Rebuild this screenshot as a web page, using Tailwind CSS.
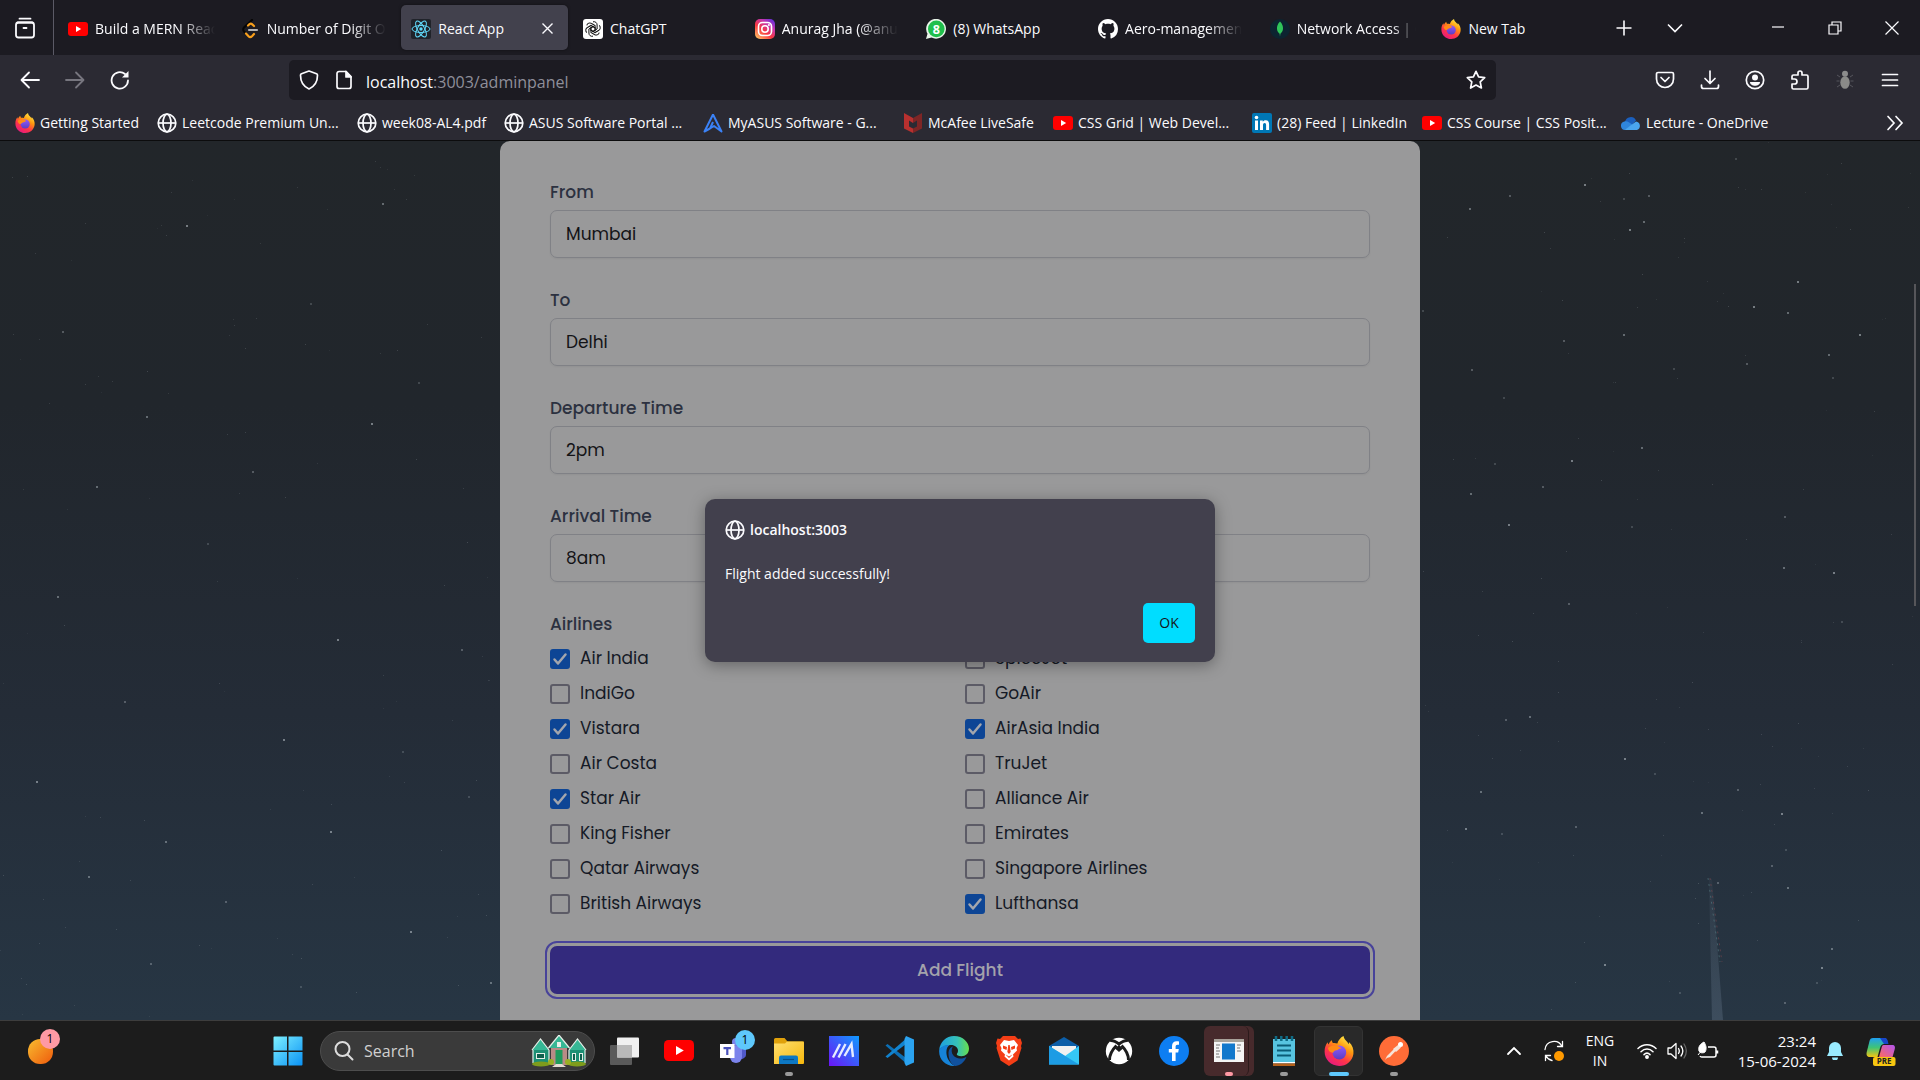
<!DOCTYPE html>
<html lang="en">
<head>
<meta charset="utf-8">
<title>React App</title>
<script src="https://cdn.jsdelivr.net/npm/@tailwindcss/browser@4"></script>
</head>
<body class="flex h-screen flex-col overflow-hidden bg-[#1c1b22] font-['Segoe_UI','Open_Sans',sans-serif] text-[14px] leading-5 text-[#fbfbfe]">

<svg class="absolute size-0" aria-hidden="true">
  <defs>
    <linearGradient id="ffBody" x1="0.8" y1="0" x2="0.2" y2="1"><stop offset="0" stop-color="#fff44f"/><stop offset=".35" stop-color="#ff980e"/><stop offset=".65" stop-color="#ff3647"/><stop offset="1" stop-color="#e31587"/></linearGradient>
    <linearGradient id="ffGlobe" x1="0" y1="0" x2="0" y2="1"><stop offset="0" stop-color="#9059ff"/><stop offset="1" stop-color="#5b3ec0"/></linearGradient>
    <linearGradient id="insta" x1="0.1" y1="1" x2="0.9" y2="0"><stop offset="0" stop-color="#fec564"/><stop offset=".4" stop-color="#f9373f"/><stop offset=".7" stop-color="#c837ab"/><stop offset="1" stop-color="#5b2fe0"/></linearGradient>
    <linearGradient id="win" x1="0" y1="0" x2="1" y2="1"><stop offset="0" stop-color="#7df0ff"/><stop offset="1" stop-color="#0a92f5"/></linearGradient>
    <linearGradient id="orange" x1="0" y1="0" x2="1" y2="1"><stop offset="0" stop-color="#f8bd30"/><stop offset="1" stop-color="#ef5a0c"/></linearGradient>
    <linearGradient id="folder" x1="0" y1="0" x2="1" y2="1"><stop offset="0" stop-color="#ffdf70"/><stop offset="1" stop-color="#f7b80c"/></linearGradient>
    <linearGradient id="asus" x1="0" y1="1" x2="1" y2="0"><stop offset="0" stop-color="#6b14f5"/><stop offset="1" stop-color="#0f9bff"/></linearGradient>
    <linearGradient id="edgeTop" x1="0" y1="0" x2="1" y2="0"><stop offset="0" stop-color="#1d9fe0"/><stop offset=".6" stop-color="#35c1b8"/><stop offset="1" stop-color="#68e04c"/></linearGradient>
    <linearGradient id="copA" x1="0" y1="0" x2="0" y2="1"><stop offset="0" stop-color="#1f9ff2"/><stop offset=".5" stop-color="#3fc476"/><stop offset="1" stop-color="#f2c512"/></linearGradient>
    <linearGradient id="copB" x1="1" y1="0" x2="0" y2="1"><stop offset="0" stop-color="#b154f0"/><stop offset="1" stop-color="#ff6a5c"/></linearGradient>
    <linearGradient id="sky" x1="0" y1="0" x2="0" y2="1"><stop offset="0" stop-color="#22262a"/><stop offset=".3" stop-color="#21262c"/><stop offset=".65" stop-color="#242c37"/><stop offset="1" stop-color="#273644"/></linearGradient>
    <linearGradient id="beam" x1="0" y1="0" x2="0" y2="1"><stop offset="0" stop-color="#5b6b7c" stop-opacity=".1"/><stop offset="1" stop-color="#4f6072" stop-opacity=".55"/></linearGradient>
  </defs>
  <symbol id="firefox" viewBox="0 0 20 20">
    <path fill="url(#ffBody)" d="M13 0c.3 1.800 1.200 2.700 2.500 4 .5.6.8 1 1 1.500.2-.4.2-1 .1-1.500C19 6 20 9 19.600 12 18.800 17 14.800 20 10.200 20 4.600 20 .4 15.800.4 10.400c0-2.600.7-4.500 2-6.200.1.700.3 1.200.6 1.500C3.500 4.400 4.300 3.400 5.300 2.800c0 .8.200 1.400.7 1.900 1-.1 2 0 2.900.3C9.400 2.900 11 1 13 0z"/>
    <circle cx="10.200" cy="11" r="4.600" fill="url(#ffGlobe)"/>
    <path fill="#ff8a16" d="M2.600 8C4.300 6.300 6.600 5.900 9 6.700c1.300.4 2 1 2.700 1.700-1.200-.2-2 .2-2.500.9-1.200 0-2.600.5-3.200 1.800C4.200 11.200 3 10 2.600 8z"/>
  </symbol>
  <symbol id="youtube" viewBox="0 0 20 14"><rect width="20" height="14" rx="3" fill="#f00"/><path d="M8 4l5.200 3L8 10z" fill="#fff"/></symbol>
  <symbol id="globe" viewBox="0 0 20 20"><g fill="none" stroke="#fbfbfe" stroke-width="1.700"><circle cx="10" cy="10" r="8.800"/><ellipse cx="10" cy="10" rx="4" ry="8.800"/><path d="M1.200 10h17.600"/></g></symbol>
</svg>

<header class="shrink-0">
  <!-- Tab strip -->
  <div class="flex h-[55px] items-center bg-[#1c1b22]">
    <button aria-label="Firefox View" class="flex h-full w-[54px] items-center justify-center border-r border-[#5b5a66] pr-0.5">
      <svg class="size-6" viewBox="0 0 24 24" fill="none" stroke="#fbfbfe" stroke-width="1.800" stroke-linecap="round"><path d="M5.500 2.700h11M3.500 6.500h15"/><rect x="2" y="6.500" width="18" height="15" rx="2.500"/><path d="M9.500 12h3"/></svg>
    </button>
    <nav class="ml-1 flex h-[45px] min-w-0 flex-1 gap-[5px] whitespace-nowrap" aria-label="Tabs">
      <a href="#" class="flex min-w-0 flex-1 items-center gap-[7px] px-[10px] pt-0.5"><svg class="h-[14px] w-5 shrink-0"><use href="#youtube"/></svg><span class="overflow-hidden [mask-image:linear-gradient(to_right,black_70%,transparent)]">Build a MERN Reac</span></a>
      <a href="#" class="flex min-w-0 flex-1 items-center gap-[7px] px-[10px] pt-0.5"><svg class="size-5 shrink-0" viewBox="0 0 20 20" fill="none" stroke-width="2.200" stroke-linecap="round"><path stroke="#050505" d="M12 1 4 8.500c-1 1-1 3 0 4l2 2"/><path stroke="#f89f1b" d="M8 6.500l1.500-1.300c.8-.6 1.700-.6 2.500 0L14 7M6 14.500l2.500 2.700c1 1 2.500 1 3.500 0L14 15"/><path stroke="#b3b3b3" d="M9 11h8"/></svg><span class="overflow-hidden [mask-image:linear-gradient(to_right,black_70%,transparent)]">Number of Digit O</span></a>
      <a href="#" aria-current="page" class="flex min-w-0 flex-1 items-center gap-[7px] rounded-[5px] bg-[#42414d] px-[10px] pt-0.5 shadow-[0_0_3px_rgba(0,0,0,0.5)]"><svg class="size-5 shrink-0" viewBox="0 0 20 20"><rect width="20" height="20" rx="2" fill="#20232a"/><g fill="none" stroke="#61dafb" stroke-width="1"><ellipse cx="10" cy="10" rx="9" ry="3.500"/><ellipse cx="10" cy="10" rx="9" ry="3.500" transform="rotate(60 10 10)"/><ellipse cx="10" cy="10" rx="9" ry="3.500" transform="rotate(120 10 10)"/></g><circle cx="10" cy="10" r="1.700" fill="#61dafb"/></svg><span class="flex-1">React App</span><svg class="mr-1 size-[13px]" viewBox="0 0 13 13" stroke="#fbfbfe" stroke-width="1.400"><path d="M1.500 1.500l10 10M11.500 1.500l-10 10"/></svg></a>
      <a href="#" class="flex min-w-0 flex-1 items-center gap-[7px] px-[10px] pt-0.5"><svg class="size-5 shrink-0" viewBox="0 0 20 20"><rect width="20" height="20" rx="3" fill="#fff"/><g fill="none" stroke="#111" stroke-width="1"><path id="petal" d="M10 2.800c2.200-.6 4.200 1 4.100 3.200v4L10 12.400 7.500 11"/><use href="#petal" transform="rotate(60 10 10)"/><use href="#petal" transform="rotate(120 10 10)"/><use href="#petal" transform="rotate(180 10 10)"/><use href="#petal" transform="rotate(240 10 10)"/><use href="#petal" transform="rotate(300 10 10)"/></g></svg><span class="overflow-hidden">ChatGPT</span></a>
      <a href="#" class="flex min-w-0 flex-1 items-center gap-[7px] px-[10px] pt-0.5"><svg class="size-5 shrink-0" viewBox="0 0 20 20"><rect width="20" height="20" rx="5" fill="url(#insta)"/><g fill="none" stroke="#fff" stroke-width="1.600"><rect x="3.500" y="3.500" width="13" height="13" rx="4"/><circle cx="10" cy="10" r="3.200"/></g><circle cx="13.900" cy="6.100" r="1" fill="#fff"/></svg><span class="overflow-hidden [mask-image:linear-gradient(to_right,black_65%,transparent)]">Anurag Jha (@anu</span></a>
      <a href="#" class="flex min-w-0 flex-1 items-center gap-[7px] px-[10px] pt-0.5"><svg class="size-5 shrink-0" viewBox="0 0 20 20"><path d="M0 20l1.500-5.200A9.900 9.900 0 1 1 5.500 18.600z" fill="#e8f5e9"/><circle cx="10.300" cy="9.900" r="8.300" fill="#1fbf4c"/><text x="10.300" y="14.500" text-anchor="middle" font-size="12.500" font-weight="700" fill="#fff">8</text></svg><span class="overflow-hidden">(8) WhatsApp</span></a>
      <a href="#" class="flex min-w-0 flex-1 items-center gap-[7px] px-[10px] pt-0.5"><svg class="size-5 shrink-0" viewBox="0 0 16 16" fill="#fff"><path d="M8 0C3.580 0 0 3.580 0 8c0 3.540 2.290 6.530 5.470 7.590.4.070.55-.17.55-.38 0-.19-.01-.82-.01-1.490-2.010.37-2.530-.49-2.690-.94-.09-.23-.48-.94-.82-1.130-.28-.15-.68-.52-.01-.53.63-.01 1.080.58 1.230.82.720 1.210 1.870.87 2.330.66.070-.52.280-.87.510-1.070-1.780-.2-3.640-.89-3.640-3.950 0-.87.310-1.590.82-2.150-.08-.2-.36-1.020.08-2.120 0 0 .67-.21 2.200.82.640-.18 1.320-.27 2-.27s1.360.09 2 .27c1.530-1.040 2.200-.82 2.200-.82.440 1.100.160 1.920.080 2.120.510.560.820 1.270.820 2.150 0 3.070-1.870 3.750-3.650 3.950.29.250.540.730.540 1.480 0 1.070-.01 1.930-.01 2.200 0 .21.150.46.550.38A8.010 8.010 0 0 0 16 8c0-4.420-3.580-8-8-8z"/></svg><span class="overflow-hidden [mask-image:linear-gradient(to_right,black_70%,transparent)]">Aero-managemen</span></a>
      <a href="#" class="flex min-w-0 flex-1 items-center gap-[7px] px-[10px] pt-0.5"><svg class="size-5 shrink-0" viewBox="0 0 20 20"><circle cx="10" cy="10" r="10" fill="#0c2430"/><path d="M10 2.500c2.400 2.400 3.200 5 3 7.500-.2 2-1.300 3.700-2.600 4.800L10 17.500l-.4-2.700C8.200 13.700 7.200 12 7 10c-.2-2.500.6-5.100 3-7.500z" fill="#2fc55a"/></svg><span class="overflow-hidden [mask-image:linear-gradient(to_right,black_80%,transparent)]">Network Access | C</span></a>
      <a href="#" class="flex min-w-0 flex-1 items-center gap-[7px] px-[10px] pt-0.5"><svg class="size-5 shrink-0"><use href="#firefox"/></svg><span class="overflow-hidden">New Tab</span></a>
    </nav>
    <div class="flex w-[322px] items-center justify-between pr-[21px] pl-[18px]">
      <div class="flex gap-[35px]">
        <button aria-label="New tab"><svg class="size-4" viewBox="0 0 16 16" stroke="#fbfbfe" stroke-width="1.600"><path d="M8 .5v15M.5 8h15"/></svg></button>
        <button aria-label="List all tabs"><svg class="size-4" viewBox="0 0 16 16" fill="none" stroke="#fbfbfe" stroke-width="1.600"><path d="M1 4.500l7 7 7-7"/></svg></button>
      </div>
      <div class="flex gap-[43px]">
        <button aria-label="Minimize"><svg class="size-[14px]" viewBox="0 0 14 14" stroke="#fbfbfe" stroke-width="1.200"><path d="M1 6h12"/></svg></button>
        <button aria-label="Restore"><svg class="size-[14px]" viewBox="0 0 14 14" fill="none" stroke="#fbfbfe" stroke-width="1.200"><path d="M1 4h9v9H1zM4 4V1h9v9h-3"/></svg></button>
        <button aria-label="Close"><svg class="size-[14px]" viewBox="0 0 14 14" stroke="#fbfbfe" stroke-width="1.200"><path d="M.5.5l13 13M13.500.5l-13 13"/></svg></button>
      </div>
    </div>
  </div>

  <!-- Navigation toolbar -->
  <div class="flex h-[50px] items-center bg-[#2b2a33] pr-5 pl-5">
    <div class="flex w-[269px] gap-[25px]">
      <button aria-label="Back"><svg class="size-5" viewBox="0 0 20 20" fill="none" stroke="#fbfbfe" stroke-width="1.800" stroke-linecap="round" stroke-linejoin="round"><path d="M19 10H2M9 2.500 1.500 10 9 17.500"/></svg></button>
      <button aria-label="Forward" disabled><svg class="size-5" viewBox="0 0 20 20" fill="none" stroke="#77767f" stroke-width="1.800" stroke-linecap="round" stroke-linejoin="round"><path d="M1 10h17M11 2.500l7.500 7.500-7.500 7.500"/></svg></button>
      <button aria-label="Reload"><svg class="size-5" viewBox="0 0 20 20" fill="none" stroke="#fbfbfe" stroke-width="1.800" stroke-linecap="round"><path d="M18 10.500A8.200 8.200 0 1 1 15 4"/><path d="M18.500 1v6.500H12z" fill="#fbfbfe" stroke="none"/></svg></button>
    </div>
    <div class="flex h-10 min-w-0 flex-1 items-center rounded-[5px] bg-[#1c1b22] px-[10px]">
      <svg class="size-5 shrink-0" viewBox="0 0 20 20" fill="none" stroke="#fbfbfe" stroke-width="1.700" stroke-linejoin="round"><path d="M10 1l7.500 2.800c.8.300 1 .7 1 1.500 0 6-2.500 11-8.500 13.700C4 16.300 1.500 11.300 1.500 5.300c0-.8.200-1.200 1-1.500z"/></svg>
      <svg class="ml-[15px] size-5 shrink-0" viewBox="0 0 20 20" fill="none" stroke="#fbfbfe" stroke-width="1.700" stroke-linejoin="round"><path d="M12 1.500H5A2 2 0 0 0 3 3.500v13a2 2 0 0 0 2 2h10a2 2 0 0 0 2-2v-10z"/><path d="M12 1.500V7h5z" fill="#fbfbfe"/></svg>
      <label for="url" class="sr-only">Address</label>
      <div class="relative mt-1 ml-3 min-w-0 flex-1 text-[16px] leading-6">
        <input id="url" type="text" value="localhost:3003/adminpanel" class="w-full bg-transparent text-transparent outline-none">
        <span class="pointer-events-none absolute inset-0 text-[#8f8f9a]" aria-hidden="true"><span class="text-[#fbfbfe]">localhost</span>:3003/adminpanel</span>
      </div>
      <button aria-label="Bookmark this page"><svg class="size-5" viewBox="0 0 20 20" fill="none" stroke="#fbfbfe" stroke-width="1.700" stroke-linejoin="round"><path d="M10 1.300l2.600 5.600 6.100.8-4.500 4.200 1.200 6.100L10 15l-5.400 3 1.200-6.100L1.300 7.700l6.100-.8z"/></svg></button>
    </div>
    <div class="flex w-[404px] justify-end gap-[25px]">
      <button aria-label="Save to Pocket"><svg class="size-5" viewBox="0 0 20 20" fill="none" stroke="#fbfbfe" stroke-width="1.700" stroke-linecap="round" stroke-linejoin="round"><path d="M3 2.500h14a1.500 1.500 0 0 1 1.500 1.500v5c0 5-4 8.500-8.500 8.500S1.500 14 1.500 9V4A1.500 1.500 0 0 1 3 2.500z"/><path d="M6 7.500l4 4 4-4"/></svg></button>
      <button aria-label="Downloads"><svg class="size-5" viewBox="0 0 20 20" fill="none" stroke="#fbfbfe" stroke-width="1.700" stroke-linecap="round" stroke-linejoin="round"><path d="M10 1v12M5 8.500l5 5 5-5M1.500 15v1.500a2 2 0 0 0 2 2h13a2 2 0 0 0 2-2V15"/></svg></button>
      <button aria-label="Account"><svg class="size-5" viewBox="0 0 20 20" fill="none" stroke="#fbfbfe" stroke-width="1.700"><circle cx="10" cy="10" r="8.700"/><circle cx="10" cy="7.500" r="3" fill="#fbfbfe" stroke="none"/><path d="M5 12h10c0 2.500-2.500 3.800-5 3.800S5 14.500 5 12z" fill="#fbfbfe" stroke="none"/></svg></button>
      <button aria-label="Extensions"><svg class="size-5" viewBox="0 0 20 20" fill="none" stroke="#fbfbfe" stroke-width="1.700" stroke-linejoin="round"><path d="M2 9V6.500A1.500 1.500 0 0 1 3.500 5H8V3a2 2 0 0 1 4 0v2h4.500A1.500 1.500 0 0 1 18 6.500v11a1.500 1.500 0 0 1-1.500 1.500h-13A1.500 1.500 0 0 1 2 17.500V14h2.500a2.500 2.500 0 0 0 0-5z"/></svg></button>
      <button aria-label="Debugger extension"><svg class="size-5" viewBox="0 0 20 20"><g stroke="#55555c" stroke-width="1" fill="none"><path d="M5 7 2 5M4.500 11H1.500M5 15l-3 2M15 7l3-2M15.500 11h3M15 15l3 2"/></g><circle cx="10" cy="3.800" r="3" fill="#8c8c8c"/><ellipse cx="10" cy="12.500" rx="4.700" ry="6.300" fill="#8a8a88"/></svg></button>
      <button aria-label="Menu"><svg class="size-5" viewBox="0 0 20 20" stroke="#fbfbfe" stroke-width="1.700" stroke-linecap="round"><path d="M2.500 4.500h15M2.500 10h15M2.500 15.500h15"/></svg></button>
    </div>
  </div>

  <!-- Bookmarks bar -->
  <div class="flex h-[36px] items-center border-b border-[#0c0c0d] bg-[#2b2a33] pt-px pr-4 pl-[15px] whitespace-nowrap">
    <a href="#" class="flex w-[142px] items-center gap-[5px]"><svg class="size-5 shrink-0"><use href="#firefox"/></svg>Getting Started</a>
    <a href="#" class="flex w-[200px] items-center gap-[5px]"><svg class="size-5 shrink-0"><use href="#globe"/></svg>Leetcode Premium Un...</a>
    <a href="#" class="flex w-[147px] items-center gap-[5px]"><svg class="size-5 shrink-0"><use href="#globe"/></svg>week08-AL4.pdf</a>
    <a href="#" class="flex w-[199px] items-center gap-[5px]"><svg class="size-5 shrink-0"><use href="#globe"/></svg>ASUS Software Portal ...</a>
    <a href="#" class="flex w-[200px] items-center gap-[5px]"><svg class="size-5 shrink-0" viewBox="0 0 20 20" fill="none" stroke="#3b82f6" stroke-width="2" stroke-linejoin="round"><path d="M10 1.500 1.500 18.500 7 15.500M10 1.500l8.500 17-7.500-5.500-4 2.500L10 9"/></svg>MyASUS Software - G...</a>
    <a href="#" class="flex w-[150px] items-center gap-[5px]"><svg class="size-5 shrink-0" viewBox="0 0 20 20"><path fill="#b8302f" d="M1 0l9 5v5L6 7.500v6l4 2V20l-9-4.500z"/><path fill="#7e2626" d="M19 0l-9 5v5l4-2.500v6l-4 2V20l9-4.500z"/></svg>McAfee LiveSafe</a>
    <a href="#" class="flex w-[199px] items-center gap-[5px]"><svg class="h-[14px] w-5 shrink-0"><use href="#youtube"/></svg>CSS Grid | Web Devel...</a>
    <a href="#" class="flex w-[170px] items-center gap-[5px]"><svg class="size-5 shrink-0" viewBox="0 0 20 20"><rect width="20" height="20" rx="2" fill="#0077b5"/><g fill="#fff"><rect x="3" y="7.500" width="3" height="9.500"/><circle cx="4.500" cy="4.500" r="1.800"/><path d="M8 7.500h2.800v1.400c.5-.9 1.500-1.600 2.900-1.600 2.700 0 3.400 1.700 3.400 4.200V17h-3v-4.800c0-1.300-.2-2.300-1.500-2.300S11 10.900 11 12.200V17H8z"/></g></svg>(28) Feed | LinkedIn</a>
    <a href="#" class="flex w-[199px] items-center gap-[5px]"><svg class="h-[14px] w-5 shrink-0"><use href="#youtube"/></svg>CSS Course | CSS Posit...</a>
    <a href="#" class="flex flex-1 items-center gap-[5px]"><svg class="size-5 shrink-0" viewBox="0 0 20 20"><path fill="#1b5fbd" d="M4 9a5.800 5.800 0 0 1 11-1.500L10 13z"/><path fill="#2f86dd" d="M4 17a4.300 4.300 0 0 1-.6-8.500C6 7.500 9 10 12 12z"/><path fill="#4aa5ee" d="M3.500 17 15 8.500a4.400 4.400 0 0 1 1 8.500z"/></svg>Lecture - OneDrive</a>
    <button aria-label="More bookmarks"><svg class="h-4 w-[18px]" viewBox="0 0 18 16" fill="none" stroke="#fbfbfe" stroke-width="1.700" stroke-linecap="round"><path d="M2 1.500 8 8l-6 6.500M10 1.500 16 8l-6 6.500"/></svg></button>
  </div>
</header>

<!-- Page viewport -->
<main class="relative flex-1 overflow-hidden bg-[#22262a] font-['Poppins','Inter',sans-serif]">
  <svg class="absolute inset-0 size-full" viewBox="0 0 1920 879" preserveAspectRatio="none" aria-hidden="true">
    <rect width="1920" height="879" fill="url(#sky)"/>
    <path d="M1709 738l3 0 11 141h-11z" fill="url(#beam)"/>
    <path d="M1708 737l12 84" stroke="#5f8a90" stroke-width="1" stroke-dasharray="2 4" opacity=".5"/>
    <path d="M1710 737l12 84" stroke="#8a4a50" stroke-width="1" stroke-dasharray="2 4" opacity=".5"/>
    <g id="stars" fill="#c9d2d8"></g>
  </svg>

  <form class="relative mx-auto w-[920px] rounded-t-[10px] bg-[#99999a] px-[50px] pt-[39px] pb-[50px] text-[17px] leading-[25px]">
    <label for="from" class="block font-medium text-[#2c3140]">From</label>
    <input id="from" type="text" value="Mumbai" class="mt-[5px] mb-[30px] block h-12 w-full rounded-[7px] border border-[#808186] px-[15px] text-[#131316] shadow-xs">
    <label for="to" class="block font-medium text-[#2c3140]">To</label>
    <input id="to" type="text" value="Delhi" class="mt-[5px] mb-[30px] block h-12 w-full rounded-[7px] border border-[#808186] px-[15px] text-[#131316] shadow-xs">
    <label for="departure" class="block font-medium text-[#2c3140]">Departure Time</label>
    <input id="departure" type="text" value="2pm" class="mt-[5px] mb-[30px] block h-12 w-full rounded-[7px] border border-[#808186] px-[15px] text-[#131316] shadow-xs">
    <label for="arrival" class="block font-medium text-[#2c3140]">Arrival Time</label>
    <input id="arrival" type="text" value="8am" class="mt-[5px] mb-[30px] block h-12 w-full rounded-[7px] border border-[#808186] px-[15px] text-[#131316] shadow-xs">

    <fieldset>
      <legend class="font-medium text-[#2c3140]">Airlines</legend>
      <div id="airlines" class="mt-[9px] grid grid-cols-2 gap-[10px] text-[#151a26]"></div>
    </fieldset>

    <button type="button" class="mt-[30px] block h-12 w-full rounded-[7px] bg-[#332a7d] font-medium text-[#a3a2ab] outline-2 outline-offset-3 outline-[#48439a]">Add Flight</button>
  </form>

  <template id="airline">
    <label class="flex items-center gap-[10px]">
      <span class="relative size-5">
        <input type="checkbox" class="peer block size-5 appearance-none rounded-[3px] border-2 border-[#5c5b66] checked:border-[#0d4595] checked:bg-[#0d4595]">
        <svg class="pointer-events-none absolute inset-0 hidden size-5 peer-checked:block" viewBox="0 0 20 20" fill="none" stroke="#a3a6ad" stroke-width="2.500" stroke-linecap="round" stroke-linejoin="round"><path d="M4.500 10.500l3.500 4 7.500-9"/></svg>
      </span>
      <span data-name></span>
    </label>
  </template>

  <div class="absolute top-[143px] right-1 h-[322px] w-0.5 bg-[#56565a]"></div>

  <!-- Alert -->
  <div class="absolute inset-0 flex items-center justify-center font-['Segoe_UI','Open_Sans',sans-serif]">
    <div role="alertdialog" aria-labelledby="host" aria-describedby="msg" class="w-[510px] rounded-[10px] bg-[#42404d] px-5 pt-[21px] pb-[19px] shadow-[0_3px_16px_rgba(0,0,0,0.35)]">
      <div class="flex items-center gap-[5px]"><svg class="size-5"><use href="#globe"/></svg><h1 id="host" class="font-semibold">localhost:3003</h1></div>
      <p id="msg" class="mt-6">Flight added successfully!</p>
      <div class="mt-[19px] flex justify-end"><button class="h-10 w-[52px] rounded-[5px] bg-[#00ddff] text-[#15141a]">OK</button></div>
    </div>
  </div>
</main>

<!-- Taskbar -->
<footer class="flex h-[60px] shrink-0 items-center border-t border-[#3d3d3d] bg-[#1c1c1c]">
  <div class="w-[260px] shrink-0 pl-6">
    <button aria-label="Widgets, 1 notification" class="relative block size-9">
      <svg class="size-9" viewBox="0 0 36 36"><rect x="4" y="6" width="25" height="25" rx="12" fill="url(#orange)"/></svg>
      <span class="absolute -top-1 right-0 flex size-5 items-center justify-center rounded-full bg-[#ff99a4] text-[12px] text-black">1</span>
    </button>
  </div>
  <div class="flex items-center">
    <button aria-label="Start" class="flex h-[50px] w-[55px] items-center justify-center"><svg class="size-[30px]" viewBox="0 0 30 30"><path fill="url(#win)" d="M1.500.5H14v14H.500V1.500a1 1 0 0 1 1-1zM15.500.5h13a1 1 0 0 1 1 1v13h-14zM.500 16H14v13.500H1.500a1 1 0 0 1-1-1zM15.500 16h14v12.500a1 1 0 0 1-1 1h-13z"/></svg></button>
    <label class="mr-px ml-[5px] flex h-10 w-[275px] items-center rounded-full border border-[#4d4d4d] bg-[#3a3a3a] pr-[7px] pl-[13px]">
      <svg class="size-5 shrink-0" viewBox="0 0 20 20" fill="none" stroke="#dcdcdc" stroke-width="2" stroke-linecap="round"><circle cx="8.500" cy="8" r="7"/><path d="M13.500 13.500l5 5"/></svg>
      <input type="search" placeholder="Search" aria-label="Search" class="ml-[10px] min-w-0 flex-1 bg-transparent text-[16px] placeholder:text-[#d0d0d0]">
      <svg class="h-8 w-14" viewBox="0 0 56 32">
        <path fill="#1d8f74" d="M2 14h16v15H2zM38 14h16v15H38z"/><path fill="#b98b86" d="M20 12h16v18H20z"/>
        <path fill="#36b795" d="M1 15 9.500 4 18 15zM38 15l8.500-11L55 15zM17.500 13 28 0l10.500 13z"/>
        <path stroke="#e7efe9" stroke-width="1.200" fill="none" d="M1 15 9.500 4 18 15M38 15l8.500-11L55 15M17.500 13 28 0l10.500 13M2 15v13M18 15v13M38 15v13M54 15v13"/>
        <path fill="#e7efe9" d="M26 7h4v5h-4zM5 18h9v6H5zM41 18h4v8h-4zM48 18h4v8h-4z"/><path fill="#0f5e4d" d="M6 19h7v4H6zM42 19h2v6h-2zM49 19h2v6h-2z"/>
        <path fill="#1f9b5d" d="M24.500 15h7v15h-7z"/><ellipse cx="10" cy="29" rx="9" ry="2.500" fill="#7f9c1c"/><ellipse cx="46" cy="29" rx="9" ry="2.500" fill="#7f9c1c"/><circle cx="20" cy="27" r="3" fill="#9ab024"/><circle cx="37" cy="27" r="3" fill="#9ab024"/><path fill="#e4dcd2" d="M25 29h6l4 3H21z"/>
      </svg>
    </label>
    <button aria-label="Task view" class="flex h-[50px] w-[55px] items-center justify-center"><svg class="size-[30px]" viewBox="0 0 30 30"><rect x="1" y="9" width="22" height="20" rx="1" fill="#5a5a5a"/><rect x="8" y="1.500" width="22" height="20" rx="1" fill="#f0f0f0"/><path d="M8 9h15v12.500H8z" fill="#b9b9b9"/></svg></button>
    <button aria-label="YouTube" class="flex h-[50px] w-[55px] items-center justify-center"><svg class="h-[21px] w-[30px]"><use href="#youtube"/></svg></button>
    <button aria-label="Teams, 1 notification" class="relative flex h-[50px] w-[55px] items-center justify-center"><svg class="size-[30px]" viewBox="0 0 30 30"><circle cx="17" cy="6" r="4" fill="#7b83eb"/><path d="M19 10h8v9a5 5 0 0 1-8 3z" fill="#5059c9"/><path d="M11 10h12v11a6 6 0 0 1-12 0z" fill="#7b83eb"/><rect x="1" y="8" width="14.500" height="14" fill="#fff"/><path d="M4.500 11h7.500v2.200H9.400V19H7.200v-5.800H4.500z" fill="#4b53bc"/></svg><span class="absolute top-1 right-1.5 flex size-5 items-center justify-center rounded-full bg-[#5ec8fb] text-[12px] text-black">1</span></button>
    <button aria-label="File Explorer" class="relative flex h-[50px] w-[55px] items-center justify-center"><svg class="size-[30px]" viewBox="0 0 30 30"><path d="M0 3.500A1.500 1.500 0 0 1 1.500 2h9l3 3.500H30V12H0z" fill="#e0a10b"/><path d="M0 7.500h11l2-2h15.500A1.500 1.500 0 0 1 30 7v20a1 1 0 0 1-1 1H0z" fill="url(#folder)"/><path d="M5 28v-6.500a2 2 0 0 1 2-2h15a2 2 0 0 1 2 2V28z" fill="#0d78c4"/><path d="M9 23.500h11" stroke="#0a4f88" stroke-width="1.200"/></svg><span class="absolute bottom-0 h-1 w-2 rounded-full bg-[#9a9a9a]"></span></button>
    <button aria-label="MyASUS" class="flex h-[50px] w-[55px] items-center justify-center"><svg class="size-[30px]" viewBox="0 0 30 30"><rect width="30" height="30" fill="url(#asus)"/><path d="M4 21.500 11 8M9.500 21.500 16.500 8M15.500 20 22.500 8l1.500 13" fill="none" stroke="#e6ecff" stroke-width="2.400"/></svg></button>
    <button aria-label="Visual Studio Code" class="flex h-[50px] w-[55px] items-center justify-center"><svg class="size-[30px]" viewBox="0 0 30 30"><path d="M1.500 9.500 3.500 8 24 23.500V29z" fill="#0c6fb5"/><path d="M1.500 20.500 3.500 22 24 6.500V1z" fill="#1183cf"/><path d="M22 0l8 3.500v23L22 30l-1.500-3V3z" fill="#2ba3f0"/></svg></button>
    <button aria-label="Microsoft Edge" class="flex h-[50px] w-[55px] items-center justify-center"><svg class="size-[30px]" viewBox="0 0 30 30"><path d="M.2 14C1 6 7.200 0 15 0c9 0 15 6.500 15 12.500 0 5-3.500 7.700-7.500 7.700-3.300 0-4.700-1.100-4.700-2 0-.7 1.200-1.200 1.200-3.500 0-3-3-5.700-7-5.700C7 9 3 10.500.2 14z" fill="url(#edgeTop)"/><path d="M.2 14c2-4 6-5.500 10.300-5C5.500 12 6 25 16 29.900 7 30.700-.7 23.500.2 14z" fill="#1683d8"/><path d="M9.500 17.500C9.500 13 12 11 14 10.500c-3 4-1 11 6 12 3 .4 5.500-.5 7.500-1.700C25.500 26.500 20.500 30 16 29.900c-4-1.500-6.500-7-6.500-12.400z" fill="#10519e"/></svg></button>
    <button aria-label="Brave" class="flex h-[50px] w-[55px] items-center justify-center"><svg class="size-[30px]" viewBox="0 0 30 30"><path d="M9 0h12l3 3 2.500-.5L28 7l-1 3 .5 2-4 12.500L15 30 6.500 24.500 2.500 12l.5-2-1-3 1.500-4.500L6 3z" fill="#f43e16"/><path d="M15 5l5-1 4 5-1.500 3 .5 2.500-4 4 .5 2-4.500 4-4.500-4 .5-2-4-4 .5-2.500L6 9l4-5z" fill="#fff"/><path d="M9 9.500l4 1.500-.5 3L9 12.500zM21 9.500 17 11l.5 3 3.500-1.500zM14.300 9h1.400l1 7-1.700 2-1.700-2zM11.500 18.500 15 20.500l3.500-2L15 22z" fill="#f43e16"/></svg></button>
    <button aria-label="Mail" class="flex h-[50px] w-[55px] items-center justify-center"><svg class="size-[30px]" viewBox="0 0 30 30"><path d="M0 10 15 1l15 9v5H0z" fill="#0c5ea8"/><path d="M3 10h24v10H3z" fill="#f1f1f1"/><path d="M0 10l16 10 14-10v18.500H0z" fill="#35c8f5"/><path d="M0 10l30 18.500H0z" fill="#1d9ce4"/></svg></button>
    <button aria-label="Xbox" class="flex h-[50px] w-[55px] items-center justify-center"><svg class="size-[28px]" viewBox="0 0 28 28"><circle cx="14" cy="14" r="13.200" fill="#fff"/><path d="M5 3.500C8 3 11.500 5 14 7c2.500-2 6-4 9-3.500M11.500 8.500C8 12 4.500 17 4.500 23M16.500 8.500c3.500 3.500 7 8.500 7 14.500" fill="none" stroke="#1c1c1c" stroke-width="3"/><path d="M14 8l4 3.500-4 3.500-4-3.500z" fill="#1c1c1c"/></svg></button>
    <button aria-label="Facebook" class="flex h-[50px] w-[55px] items-center justify-center"><svg class="size-[30px]" viewBox="0 0 30 30"><circle cx="15" cy="15" r="15" fill="#0d7ef2"/><path d="M13 25V16.500H9.800V13H13v-2.700C13 7 14.900 5.300 17.600 5.300c1.300 0 2.400.2 2.400.2v3.200h-1.500c-1.400 0-1.900.9-1.900 1.800V13h3.200l-.6 3.500h-2.600V25z" fill="#fff"/></svg></button>
    <button aria-label="Code window" class="relative ml-[3px] flex h-[50px] w-[50px] items-center justify-center rounded-[6px] bg-[#472a2c]"><svg class="h-[23px] w-[30px]" viewBox="0 0 30 23"><rect width="30" height="23" fill="#f5f5f5"/><path d="M0 0h30v3H0z" fill="#a8a29a"/><rect x="8" y="4.500" width="13" height="16" fill="#1278cc"/><path d="M2 6h4M2 9h3M2 12h4M2 15h3M2 18h4M23 6h4M23 9h3M23 12h4" stroke="#777"/></svg><span class="absolute right-[5px] h-full w-[6px] rounded-r-[6px] border-r border-[#2c1a1b]"></span><span class="absolute bottom-0 h-1 w-2 rounded-full bg-[#ff99a4]"></span></button>
    <button aria-label="Notepad" class="relative ml-[2px] flex h-[50px] w-[55px] items-center justify-center"><svg class="size-[30px]" viewBox="0 0 30 30"><path d="M4 3h22v23H4z" fill="#57c4e0"/><path d="M4 26h22v1.500H4z" fill="#fff"/><path d="M4 27.500h22V30H4z" fill="#b4611b"/><path d="M8 9.500h14M8 14.500h14M8 19.500h14" stroke="#0b5c77" stroke-width="2"/><path d="M7 0v5M12.300 0v5M17.700 0v5M23 0v5" stroke="#0f6c86" stroke-width="2.500"/></svg><span class="absolute bottom-0 h-1 w-2 rounded-full bg-[#9a9a9a]"></span></button>
    <button aria-label="Firefox" class="relative mx-[3px] flex h-[50px] w-[49px] items-center justify-center rounded-[6px] border border-[#333] bg-[#292929]"><svg class="size-[30px]"><use href="#firefox"/></svg><span class="absolute -bottom-px h-1 w-5 rounded-full bg-[#5ec8fb]"></span></button>
    <button aria-label="Postman" class="relative flex h-[50px] w-[55px] items-center justify-center"><svg class="size-[30px]" viewBox="0 0 30 30"><circle cx="15" cy="15" r="15" fill="#ff6c37"/><path d="M6 24l2-4 8-8 2 1.500-7 7.500-3 1z" fill="#f7e3d8"/><path d="M14 13l5-4 3 2.500-5 4.500z" fill="#f7e3d8"/><circle cx="21.500" cy="8.500" r="2.500" fill="#fff"/></svg><span class="absolute bottom-0 h-1 w-2 rounded-full bg-[#9a9a9a]"></span></button>
  </div>
  <div class="ml-auto flex items-center pr-6">
    <button aria-label="Hidden icons"><svg class="size-4" viewBox="0 0 16 16" fill="none" stroke="#fff" stroke-width="1.800" stroke-linecap="round"><path d="M2 11l6-6 6 6"/></svg></button>
    <button aria-label="Updates" class="ml-[21px]"><svg class="size-[22px]" viewBox="0 0 22 22" fill="none" stroke="#fff" stroke-width="1.300" stroke-linecap="round"><path d="M2 9.500a9 9 0 0 1 17-3M19.500 1.500v5h-5M2.500 20.500v-5h5M3 16a9 9 0 0 0 6 4.500"/><circle cx="16" cy="16" r="5" fill="#ff9a00" stroke="none"/></svg></button>
    <button class="ml-[19px] w-[32px] text-center text-[14px]">ENG<br>IN</button>
    <svg class="ml-[21px] size-5" viewBox="0 0 20 20" fill="none" stroke="#fff" stroke-width="1.500" stroke-linecap="round"><path d="M1 7.500c5-5 13-5 18 0M4 10.700c3.500-3.500 8.500-3.500 12 0M7 13.600c1.800-1.800 4.200-1.800 6 0"/><circle cx="10" cy="16" r="1.200" fill="#fff"/></svg>
    <svg class="ml-[10px] size-5" viewBox="0 0 20 20" fill="none" stroke="#fff" stroke-width="1.300" stroke-linecap="round" stroke-linejoin="round"><path d="M1 7h3l5-4.500v15L4 13H1zM11.500 7.500c1 1.500 1 3.500 0 5M14 5c2.200 3 2.200 7 0 10"/><path d="M17 3c3 4.500 3 9.500 0 14" stroke="#666"/></svg>
    <svg class="ml-[10px] h-5 w-[22px]" viewBox="0 0 22 20" fill="none" stroke="#fff" stroke-width="1.500" stroke-linejoin="round"><path d="M11 6h6a2 2 0 0 1 2 2v6a2 2 0 0 1-2 2H5a2 2 0 0 1-2-1M20.500 9.500v3"/><path d="M7 1C3 3 1 6 2 10c1 2 4 2.500 6 1 2-3 1-7-1-10zM1 14l4-5" fill="#fff" stroke-width="1"/></svg>
    <button class="ml-3 w-[85px] text-right text-[15px] whitespace-nowrap">23:24<br>15-06-2024</button>
    <button aria-label="Notifications" class="ml-[10px]"><svg class="size-[18px]" viewBox="0 0 18 18" fill="#99ebff"><path d="M9 0a6 6 0 0 1 6 6v4l2 4H1l2-4V6a6 6 0 0 1 6-6zM6 15.500h6a3 3 0 0 1-6 0z"/></svg></button>
    <button aria-label="Copilot preview" class="ml-[22px]"><svg class="size-[30px]" viewBox="0 0 30 30"><path d="M7 2h11c2 0 3 1.500 3.500 4l.5 2h-4c-2 0-3 1-4 4l-2.500 9H4c-3.500 0-4-2.500-3-6L3.500 5C4 3 5 2 7 2z" fill="url(#copA)"/><path d="M14 2h5c1.500 0 2.500 1.500 3 4l.5 2H18z" fill="#1746c8"/><path d="M17.500 9H26c3 0 3.500 2 2.500 5l-2 7H13l2.500-9c.5-2 1-3 2-3z" fill="url(#copB)"/><rect x="7" y="21" width="22.500" height="9" rx="2" fill="#f7c610"/><text x="18.200" y="28.400" text-anchor="middle" font-size="8" font-weight="700" fill="#222">PRE</text></svg></button>
  </div>
</footer>

<script>
  const airlines = [
    ["Air India", true], ["SpiceJet", false], ["IndiGo", false], ["GoAir", false],
    ["Vistara", true], ["AirAsia India", true], ["Air Costa", false], ["TruJet", false],
    ["Star Air", true], ["Alliance Air", false], ["King Fisher", false], ["Emirates", false],
    ["Qatar Airways", false], ["Singapore Airlines", false], ["British Airways", false], ["Lufthansa", true]
  ];
  const list = document.getElementById("airlines");
  const row = document.getElementById("airline");
  for (const [name, checked] of airlines) {
    const node = row.content.cloneNode(true);
    node.querySelector("[data-name]").textContent = name;
    node.querySelector("input").checked = checked;
    list.append(node);
  }

  // Bright stars as [x, y]; fainter ones are scattered by a fixed seed.
  const bright = [[1735,17],[1509,54],[1469,67],[1584,43],[1623,57],[1648,54],[1643,80],[1629,88],[1422,169],[1563,199],[1623,193],[1753,165],[1673,227],[1746,222],[1828,213],[1859,193],[1503,256],[1471,228],[1641,306],[1571,319],[1494,322],[1542,345],[1470,352],[1508,383],[1631,385],[1784,375],[1783,426],[1833,431],[1841,480],[1568,462],[1787,171],[1797,140],[1832,236],[1505,578],[1529,575],[1624,617],[1654,632],[1737,648],[1480,650],[1465,687],[1501,692],[1575,685],[1701,671],[1781,672],[1785,708],[1771,724],[1787,746],[1604,823],[1679,851],[1784,861],[1831,807],[1821,826],[1816,841],[1717,741],[382,62],[186,84],[310,162],[62,190],[146,275],[371,282],[418,241],[252,330],[96,345],[337,498],[207,402],[461,508],[57,455],[283,598],[402,610],[124,560],[165,700],[330,690],[468,655],[225,760],[88,735],[410,790],[300,845],[150,822],[490,841],[36,640]];
  const stars = document.getElementById("stars");
  const dot = (x, y, opacity, size) => {
    const r = document.createElementNS("http://www.w3.org/2000/svg", "rect");
    for (const [k, v] of Object.entries({ x, y, width: size, height: size, opacity })) r.setAttribute(k, v);
    stars.append(r);
  };
  bright.forEach(([x, y], i) => dot(x, y, 0.2 + (i % 4) * 0.1, 2));
  let seed = 7;
  const rand = () => (seed = (seed * 16807) % 2147483647) / 2147483647;
  for (let i = 0; i < 420; i++) dot(Math.floor(rand() * 1920), Math.floor(rand() * 879), 0.06 + rand() * 0.14, 1);
</script>
</body>
</html>
